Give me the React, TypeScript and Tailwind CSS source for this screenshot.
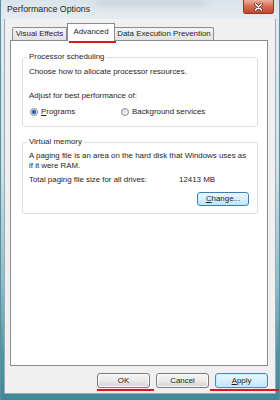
import React from "react";

const font = { fontFamily: '"Liberation Sans", Arial, sans-serif' };

function Radio({ checked }: { checked: boolean }) {
  return (
    <span className="relative inline-flex h-[8px] w-[8px] items-center justify-center rounded-full border border-[#8a8f96] bg-gradient-to-br from-[#d5d9de] to-[#f7f8f9]">
      {checked && (
        <span className="h-[4px] w-[4px] rounded-full bg-[#2d5fa3] shadow-[0_0_1px_#5b8fd6]" />
      )}
    </span>
  );
}

function Btn({ children, def }: { children: React.ReactNode; def?: boolean }) {
  return (
    <div
      className={
        "flex h-[15px] w-[53px] items-center justify-center rounded-[3px] border text-[7.9px] leading-none text-[#1b1b1b] " +
        (def
          ? "border-[#4a8ab8] bg-gradient-to-b from-[#eaf6fd] via-[#d9effc] to-[#bde4f8] shadow-[inset_0_0_0_1px_#c9ecfb]"
          : "border-[#7a7a7a] bg-gradient-to-b from-[#f4f4f4] via-[#ebebeb] to-[#d2d2d2] shadow-[inset_0_0_0_1px_#fbfbfb]")
      }
    >
      {children}
    </div>
  );
}

export default function App() {
  return (
    <div
      className="relative flex h-[400px] w-[280px] flex-col overflow-hidden border-x border-[#5d8e9b] bg-[linear-gradient(to_bottom,#e3ebf1_0%,#d3e3ea_40%,#8cbfcc_70%,#4f98a9_88%,#3e8899_100%)]"
      style={font}
    >
      {/* title bar */}
      <div className="relative flex h-[19px] shrink-0 items-center bg-gradient-to-b from-[#d9e3ea] to-[#e6edf2] pl-[6px]">
        <div className="pointer-events-none absolute left-[95px] top-0 h-[6px] w-[110px] rounded-full bg-[#b8c6d2] opacity-60 blur-[3px]" />
        <span className="relative text-[8.8px] text-[#1f1f1f]">Performance Options</span>
        <div className="absolute right-[5px] top-0 flex h-[14px] w-[31px] items-center justify-center rounded-b-[3px] border border-t-0 border-[#8a3a2a] bg-gradient-to-b from-[#eab09c] via-[#d66a50] to-[#c4452d]">
          <svg width="9" height="8" viewBox="0 0 9 8">
            <path d="M1.5 1 L7.5 7 M7.5 1 L1.5 7" stroke="#5a2a20" strokeWidth="3" strokeLinecap="round" />
            <path d="M1.5 1 L7.5 7 M7.5 1 L1.5 7" stroke="#ffffff" strokeWidth="1.6" strokeLinecap="round" />
          </svg>
        </div>
      </div>

      {/* frame sides */}
      <div className="flex flex-1 pl-[4px] pr-[4px] pb-[7px]">
        <div className="flex flex-1 flex-col bg-[#f0f0f0] outline outline-1 outline-[#9aa9b4] text-[#1e1e1e]">
          {/* tabs */}
          <div className="ml-[7px] mt-[4px] flex h-[17px] items-end text-[7.9px] leading-none">
            <div className="flex h-[13px] w-[55px] items-center justify-center rounded-tl-[2px] border border-b-0 border-[#898c95] bg-gradient-to-b from-[#f4f4f4] to-[#e2e2e2]">
              Visual Effects
            </div>
            <div className="relative z-10 -mb-px flex h-[18px] w-[48px] items-start justify-center border border-b-0 border-[#898c95] bg-white pt-[4px]">
              Advanced
            </div>
            <div className="flex h-[13px] w-[99px] items-center justify-center rounded-tr-[2px] border border-b-0 border-l-0 border-[#898c95] bg-gradient-to-b from-[#f4f4f4] to-[#e2e2e2]">
              Data Execution Prevention
            </div>
          </div>

          {/* panel */}
          <div className="ml-[5px] flex h-[326px] w-[258px] flex-col border border-[#898c95] bg-white pl-[11px] pr-[9px] pt-[16px] text-[7.9px] leading-[10px]">
            <div className="relative rounded-[3px] border border-[#d5dfe5] px-[6px] pb-[9px] pt-[9px]">
              <span className="absolute -top-[6px] left-[4px] bg-white px-[2px]">Processor scheduling</span>
              <div>Choose how to allocate processor resources.</div>
              <div className="mt-[14px]">Adjust for best performance of:</div>
              <div className="mt-[6px] flex items-center">
                <div className="flex w-[92px] items-center gap-[3px] pl-[1px]">
                  <Radio checked />
                  <span>
                    <span className="underline">P</span>rograms
                  </span>
                </div>
                <div className="flex items-center gap-[3px]">
                  <Radio checked={false} />
                  <span>Background services</span>
                </div>
              </div>
            </div>

            <div className="relative mt-[15px] rounded-[3px] border border-[#d5dfe5] px-[6px] pb-[7px] pr-[8px] pt-[8px]">
              <span className="absolute -top-[6px] left-[4px] bg-white px-[2px]">Virtual memory</span>
              <div>A paging file is an area on the hard disk that Windows uses as</div>
              <div>if it were RAM.</div>
              <div className="mt-[4px] flex">
                <span className="w-[150px]">Total paging file size for all drives:</span>
                <span>12413 MB</span>
              </div>
              <div className="mt-[7px] flex justify-end">
                <div className="flex h-[14px] w-[52px] items-center justify-center rounded-[3px] border border-[#3c7fb1] bg-gradient-to-b from-[#eaf6fd] via-[#d9effc] to-[#bde4f8] leading-none">
                  <span>
                    <span className="underline">C</span>hange...
                  </span>
                </div>
              </div>
            </div>
          </div>

          {/* buttons */}
          <div className="mt-[7px] flex justify-end gap-[6px] pr-[7px]">
            <Btn>OK</Btn>
            <Btn>Cancel</Btn>
            <Btn def>
              <span>
                <span className="underline">A</span>pply
              </span>
            </Btn>
          </div>
        </div>
      </div>

      {/* red annotation marks */}
      <div className="absolute left-[68px] top-[41px] h-[2px] w-[47px] bg-[#e0141a]" />
      <div className="absolute left-[96px] top-[389px] h-[2px] w-[57px] bg-[#e0141a]" />
      <div className="absolute left-[209px] top-[389px] h-[2px] w-[69px] bg-[#e0141a]" />
    </div>
  );
}
